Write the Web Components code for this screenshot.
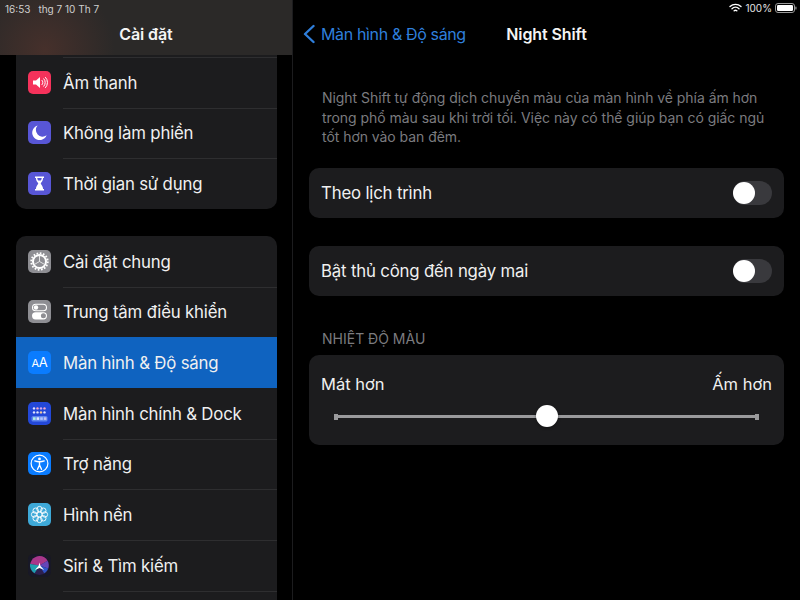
<!DOCTYPE html>
<html lang="vi">
<head>
<meta charset="utf-8">
<title>Night Shift</title>
<style>
    html, body {
        margin: 0;
        padding: 0;
        height: 100%;
        background: #000;
        color: #f2f2f2;
        font-family: Inter, "Noto Sans", sans-serif;
        overflow: hidden;
    }
</style>
</head>
<body>

<split-view>
    <side-bar slot="side" time="16:53" date="thg 7 10 Th 7" heading="Cài đặt">
        <settings-card flat>
            <settings-row icon="sound">Âm thanh</settings-row>
            <settings-row icon="moon">Không làm phiền</settings-row>
            <settings-row icon="hourglass">Thời gian sử dụng</settings-row>
        </settings-card>
        <settings-card>
            <settings-row first icon="gear">Cài đặt chung</settings-row>
            <settings-row icon="switches">Trung tâm điều khiển</settings-row>
            <settings-row icon="display" selected>Màn hình &amp; Độ sáng</settings-row>
            <settings-row icon="home" first>Màn hình chính &amp; Dock</settings-row>
            <settings-row icon="access">Trợ năng</settings-row>
            <settings-row icon="flower">Hình nền</settings-row>
            <settings-row icon="siri">Siri &amp; Tìm kiếm</settings-row>
            <settings-row icon="none"></settings-row>
        </settings-card>
    </side-bar>

    <detail-pane slot="detail" back="Màn hình &amp; Độ sáng" heading="Night Shift">
        <p-note>Night Shift tự động dịch chuyển màu của màn hình về phía ấm hơn trong phổ màu sau khi trời tối. Việc này có thể giúp bạn có giấc ngủ tốt hơn vào ban đêm.</p-note>
        <toggle-row>Theo lịch trình</toggle-row>
        <toggle-row>Bật thủ công đến ngày mai</toggle-row>
        <temp-slider heading="NHIỆT ĐỘ MÀU" cool="Mát hơn" warm="Ấm hơn" value="0.5"></temp-slider>
    </detail-pane>
</split-view>

<script>
    // flower petals: 8 rings round the middle
    const petals = Array.from({ length: 8 }, (_, i) => {
        const a = i * Math.PI / 4;
        return `<circle cx="${(11.5 + 5.4 * Math.cos(a)).toFixed(2)}" cy="${(11.5 + 5.4 * Math.sin(a)).toFixed(2)}" r="2.7"/>`;
    }).join("");

    const ICONS = {
        sound: ["#f5325b", `<path d="M5 9.500h3l4-3.500v11l-4-3.500H5z" fill="#fff"/><path d="M14 9.300a3 3 0 0 1 0 4.400M15.800 7.800a5.200 5.200 0 0 1 0 7.400M17.500 6.400a7.200 7.200 0 0 1 0 10.200" fill="none" stroke="#fff" stroke-width="1" stroke-linecap="round"/>`],
        moon: ["#5856d6", `<path d="M9.600 4.600a7.400 7.400 0 1 0 9 9.600 6.600 6.600 0 0 1-9-9.600z" fill="#fff"/>`],
        hourglass: ["#5856d6", `<path d="M7 4.500h9v1.400h-.9c0 3-1.900 4.200-2.400 5.600.5 1.400 2.400 2.600 2.400 5.600h.9v1.400H7v-1.400h.9c0-3 1.900-4.200 2.400-5.600-.5-1.400-2.400-2.600-2.400-5.600H7z" fill="#fff"/><path d="M9.300 6h4.400c0 1.200-.5 2-1 2.600h-2.400c-.5-.6-1-1.400-1-2.600z" fill="#5856d6"/>`],
        gear: ["#8e8e93", `<circle cx="11.500" cy="11.500" r="6.500" fill="none" stroke="#fff" stroke-width="2"/><circle cx="11.500" cy="11.500" r="8.300" fill="none" stroke="#fff" stroke-width="1.800" stroke-dasharray="1.700 1.560"/><path d="M11.500 11.500V5.500M11.500 11.500l5.200 3M11.500 11.500l-5.200 3" stroke="#eee" stroke-width=".9"/>`],
        switches: ["#8e8e93", `<rect x="4.500" y="4.200" width="14" height="6.600" rx="3.300" fill="none" stroke="#fff" stroke-width="1.100"/><circle cx="8" cy="7.500" r="2.200" fill="#fff"/><rect x="4" y="12.200" width="15" height="7.200" rx="3.600" fill="#fff"/><circle cx="15.400" cy="15.800" r="2.500" fill="#8e8e93"/>`],
        display: ["#0a7cff", `<text x="11.500" y="16.300" text-anchor="middle" font-family="Inter, sans-serif" fill="#fff"><tspan font-size="11">A</tspan><tspan font-size="13">A</tspan></text>`],
        home: ["#2348d8", `<g fill="#dfe4ff"><circle cx="6" cy="6.400" r="1.200"/><circle cx="9.500" cy="6.400" r="1.200" fill="#f7a8c8"/><circle cx="13" cy="6.400" r="1.200" fill="#d0a8f6"/><circle cx="16.500" cy="6.400" r="1.200" fill="#f7a8c8"/><circle cx="6" cy="10.400" r="1.200"/><circle cx="9.500" cy="10.400" r="1.200"/><circle cx="13" cy="10.400" r="1.200" fill="#f6c898"/><circle cx="16.500" cy="10.400" r="1.200"/></g><rect x="3.500" y="14" width="16" height="5.500" rx="1.600" fill="#5f86ee"/><g><rect x="5" y="15.300" width="2.600" height="2.600" fill="#aef0e0"/><rect x="8.600" y="15.300" width="2.600" height="2.600" fill="#dfe8ff"/><rect x="12.200" y="15.300" width="2.600" height="2.600" fill="#b0c4ff"/><rect x="15.800" y="15.300" width="2.600" height="2.600" fill="#c8c0f0"/></g>`],
        access: ["#0a7cff", `<circle cx="11.500" cy="11.500" r="8.400" fill="none" stroke="#fff" stroke-width="1.200"/><circle cx="11.500" cy="6.900" r="1.400" fill="#fff"/><path d="M6.800 8.900c1.600.6 3 .8 4.700.8s3.100-.2 4.700-.8M11.500 9.800v3.400M11.500 13l-2 4.300M11.500 13l2 4.300" fill="none" stroke="#fff" stroke-width="1.400" stroke-linecap="round"/>`],
        flower: ["#3ea9d8", `<g fill="none" stroke="#fff" stroke-width=".9"><circle cx="11.500" cy="11.500" r="2.500"/>${petals}</g>`],
        siri: ["#181826", `<circle cx="11.500" cy="11.500" r="9.600" fill="#2c2050"/><path d="M2.300 10C3 5.500 7 1.900 11.500 1.900c3.500 0 6.500 2 8 4.800l-8 4.800z" fill="#a8368a"/><path d="M11.500 11.500l8-4.800c1.300 2.400 1.600 5.200.7 7.800z" fill="#6546b8"/><path d="M2 10c-.4 3.600 1.300 7.200 4.500 9.300l5-7.800z" fill="#1f9fb0"/><path d="M20.200 14.500c-.8 2-2.200 3.700-4 4.800l-4.700-7.800z" fill="#2f55c8"/><path d="M11.500 8.500l1 3.600 3.700 3.900-4.700-2.100-4.700 2.100 3.700-3.900z" fill="#fff"/>`],
    };

    customElements.define("split-view", class extends HTMLElement {
        constructor() {
            super();
            this.attachShadow({ mode: "open" }).innerHTML = `
                <style>
                    :host { display: grid; grid-template-columns: 293px 1fr; width: 800px; height: 600px; overflow: hidden; background: #000; }
                    ::slotted([slot=side]) { border-right: 1px solid #1c1c1e; }
                </style>
                <slot name="side"></slot>
                <slot name="detail"></slot>`;
        }
    });

    customElements.define("side-bar", class extends HTMLElement {
        constructor() {
            super();
            this.attachShadow({ mode: "open" }).innerHTML = `
                <style>
                    :host { display: flex; flex-direction: column; height: 600px; overflow: hidden; }
                    header {
                        flex: none; height: 55px; box-sizing: border-box; padding: 3px 5px 0;
                        background:
                            radial-gradient(circle at 45px 50px, #46302b 0, rgba(70,48,43,0) 70px),
                            #2b2928;
                    }
                    .status { font-size: 10px; line-height: 12px; color: #cfcfcf; display: flex; gap: 8px; }
                    h1 { margin: 9px 0 0; font-size: 16px; line-height: 20px; font-weight: 600; letter-spacing: -.1px; text-align: center; color: #f4f4f4; }
                    .list { flex: none; display: flex; flex-direction: column; gap: 27px; padding: 0 15px 0 16px; }
                </style>
                <header>
                    <div class="status"><span>${this.getAttribute("time")}</span><span>${this.getAttribute("date")}</span></div>
                    <h1>${this.getAttribute("heading")}</h1>
                </header>
                <div class="list"><slot></slot></div>`;
        }
    });

    customElements.define("settings-card", class extends HTMLElement {
        constructor() {
            super();
            this.attachShadow({ mode: "open" }).innerHTML = `
                <style>
                    :host { display: block; background: #1c1c1e; border-radius: 10px; overflow: hidden; }
                    :host([flat]) { border-radius: 0 0 10px 10px; padding-top: 2px; }
                </style>
                <slot></slot>`;
        }
    });

    customElements.define("settings-row", class extends HTMLElement {
        constructor() {
            super();
            const [bg, art] = ICONS[this.getAttribute("icon")] || ["transparent", ""];
            this.attachShadow({ mode: "open" }).innerHTML = `
                <style>
                    :host { display: block; height: 50.67px; position: relative; font-size: 16.8px; letter-spacing: -.18px; color: #f0f0f0; }
                    :host([selected]) { background: #0f63c0; }
                    .line { position: absolute; left: 47px; right: 0; top: 0; height: 1px; background: #2e2e30; }
                    :host([first]) .line, :host([selected]) .line { display: none; }
                    .inner { display: flex; align-items: center; gap: 12px; height: 100%; padding-left: 12px; }
                    .icon { flex: none; width: 23px; height: 23px; border-radius: 5px; display: block; }
                    span { padding-top: .6px; }
                </style>
                <div class="line"></div>
                <div class="inner">
                    <svg class="icon" viewBox="0 0 23 23" style="background:${bg}">${art}</svg>
                    <span><slot></slot></span>
                </div>`;
        }
    });

    customElements.define("detail-pane", class extends HTMLElement {
        constructor() {
            super();
            this.attachShadow({ mode: "open" }).innerHTML = `
                <style>
                    :host { display: block; height: 600px; overflow: hidden; }
                    .status { display: flex; justify-content: flex-end; align-items: center; gap: 3px; height: 16px; padding-right: 3px; font-size: 10px; color: #e4e4e4; }
                    .status svg { display: block; }
                    nav { display: grid; grid-template-columns: 1fr auto 1fr; align-items: center; height: 35px; font-size: 16px; }
                    .back { display: flex; align-items: center; gap: 6px; padding-left: 10px; color: #2f7fdc; white-space: nowrap; letter-spacing: -.36px; }
                    h1 { margin: 0; font-size: 16px; font-weight: 600; letter-spacing: -.1px; color: #f4f4f4; }
                    .body { display: flex; flex-direction: column; padding: 4px 16px 0; }
                </style>
                <div class="status">
                    <svg width="13" height="10" viewBox="0 0 13 10" fill="none" stroke="#fff" stroke-linecap="round"><path d="M1 3.600a8 8 0 0 1 11 0" stroke-width="1.400"/><path d="M3 5.700a5 5 0 0 1 7 0" stroke-width="1.400"/><path d="M5.200 7.800a2 2 0 0 1 2.600 0" stroke-width="1.500"/></svg>
                    <span>100%</span>
                    <svg width="22" height="10" viewBox="0 0 22 10"><rect x=".5" y=".5" width="19" height="9" rx="2.500" fill="none" stroke="#999"/><rect x="2" y="2" width="16" height="6" rx="1.200" fill="#fff"/><rect x="20.300" y="3.500" width="1.200" height="3" rx=".6" fill="#999"/></svg>
                </div>
                <nav>
                    <div class="back">
                        <svg width="12" height="20" viewBox="0 0 12 20" fill="none" stroke="#2f7fdc" stroke-width="2.400" stroke-linecap="round" stroke-linejoin="round"><path d="M10.500 2 2 10l8.500 8"/></svg>
                        <span>${this.getAttribute("back").replace("&", "&amp;")}</span>
                    </div>
                    <h1>${this.getAttribute("heading")}</h1>
                    <div></div>
                </nav>
                <div class="body"><slot></slot></div>`;
        }
    });

    customElements.define("p-note", class extends HTMLElement {
        constructor() {
            super();
            this.attachShadow({ mode: "open" }).innerHTML = `
                <style>
                    :host { display: block; padding: 33px 13px 0; height: 113px; box-sizing: border-box; font-size: 14px; line-height: 19.5px; letter-spacing: -.05px; color: #7b7b7f; }
                </style>
                <slot></slot>`;
        }
    });

    customElements.define("toggle-row", class extends HTMLElement {
        constructor() {
            super();
            this.attachShadow({ mode: "open" }).innerHTML = `
                <style>
                    :host { display: flex; align-items: center; justify-content: space-between; height: 50px; margin-bottom: 28px; padding: 0 12px; background: #1c1c1e; border-radius: 10px; font-size: 16.8px; letter-spacing: -.18px; color: #f0f0f0; }
                    .track { width: 39px; height: 24px; border-radius: 12px; background: #39393d; display: flex; align-items: center; }
                    .knob { width: 22px; height: 22px; border-radius: 50%; background: #fff; }
                </style>
                <span><slot></slot></span>
                <div class="track"><div class="knob"></div></div>`;
        }
    });

    customElements.define("temp-slider", class extends HTMLElement {
        constructor() {
            super();
            this.attachShadow({ mode: "open" }).innerHTML = `
                <style>
                    :host { display: block; margin-top: 6px; }
                    h2 { margin: 0 0 7px; padding-left: 13px; font-size: 14px; line-height: 18px; font-weight: 400; color: #7b7b7f; }
                    .card { height: 90px; box-sizing: border-box; padding: 18px 12px 0; background: #1c1c1e; border-radius: 10px; }
                    .labels { display: flex; justify-content: space-between; font-size: 16.5px; line-height: 22px; color: #f0f0f0; }
                    .track { position: relative; height: 3px; margin: 20px 14px 0; background: #9a9a9c; }
                    .track::before, .track::after { content: ""; position: absolute; top: -1.5px; width: 4px; height: 6px; background: #9a9a9c; }
                    .track::before { left: -1px; }
                    .track::after { right: -1px; }
                    .thumb { position: absolute; top: 50%; width: 22px; height: 22px; margin: -11.5px 0 0 -11px; border-radius: 50%; background: #fff; box-shadow: 0 1px 3px rgba(0,0,0,.4); }
                </style>
                <h2>${this.getAttribute("heading")}</h2>
                <div class="card">
                    <div class="labels"><span>${this.getAttribute("cool")}</span><span>${this.getAttribute("warm")}</span></div>
                    <div class="track"><div class="thumb" style="left:${this.getAttribute("value") * 100}%"></div></div>
                </div>`;
        }
    });
</script>
</body>
</html>
